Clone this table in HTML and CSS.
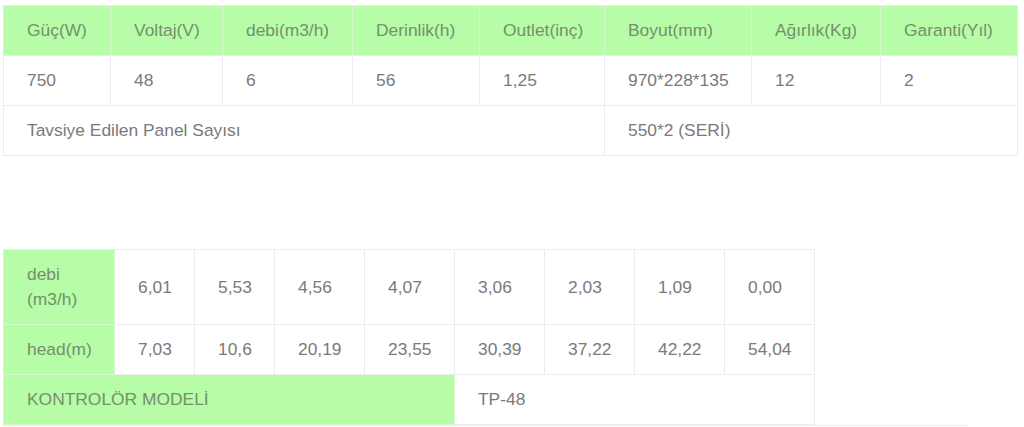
FILE: index.html
```html
<!DOCTYPE html>
<html lang="tr">
<head>
<meta charset="utf-8">
<title>Teknik Özellikler</title>
<link rel="stylesheet" href="styles.css">
</head>
<body>
<div class="page">
  <table class="spec">
    <colgroup>
      <col class="w107"><col class="w112"><col class="w130"><col class="w127"><col class="w125"><col class="w147"><col class="w129"><col class="w137">
    </colgroup>
    <thead>
      <tr>
        <th>Güç(W)</th><th>Voltaj(V)</th><th>debi(m3/h)</th><th>Derinlik(h)</th><th>Outlet(inç)</th><th>Boyut(mm)</th><th>Ağırlık(Kg)</th><th>Garanti(Yıl)</th>
      </tr>
    </thead>
    <tbody>
      <tr>
        <td>750</td><td>48</td><td>6</td><td>56</td><td>1,25</td><td>970*228*135</td><td>12</td><td>2</td>
      </tr>
      <tr>
        <td colspan="5">Tavsiye Edilen Panel Sayısı</td><td colspan="3">550*2 (SERİ)</td>
      </tr>
    </tbody>
  </table>

  <div class="curve-wrap">
    <table class="curve">
      <colgroup>
        <col class="w111"><col class="w80"><col class="w80"><col class="w90"><col class="w90"><col class="w90"><col class="w90"><col class="w90"><col class="w90">
      </colgroup>
      <tbody>
        <tr>
          <td class="green">debi (m3/h)</td><td>6,01</td><td>5,53</td><td>4,56</td><td>4,07</td><td>3,06</td><td>2,03</td><td>1,09</td><td>0,00</td>
        </tr>
        <tr>
          <td class="green">head(m)</td><td>7,03</td><td>10,6</td><td>20,19</td><td>23,55</td><td>30,39</td><td>37,22</td><td>42,22</td><td>54,04</td>
        </tr>
        <tr>
          <td class="green" colspan="5">KONTROLÖR MODELİ</td><td colspan="4">TP-48</td>
        </tr>
      </tbody>
    </table>
  </div>
</div>
</body>
</html>
```

FILE: styles.css
```css
html, body {
  margin: 0;
  padding: 0;
  background: #ffffff;
}

body {
  font-family: "Liberation Sans", Arial, sans-serif;
  font-size: 17.4px;
  color: #7a7a7a;
}

.page {
  padding: 5px 0 0 3px;
}

table {
  border-collapse: collapse;
  table-layout: fixed;
}

th, td {
  border: 1px solid #ececec;
  padding: 12px 18px 12px 23px;
  line-height: 25px;
  text-align: left;
  font-weight: normal;
  vertical-align: middle;
}

.spec {
  width: 1014px;
}

.spec th {
  background: #b7fca7;
  color: #74906c;
  border-color: #d9f7d1;
}

.w107 { width: 107px; }
.w112 { width: 112px; }
.w130 { width: 130px; }
.w127 { width: 127px; }
.w125 { width: 125px; }
.w147 { width: 147px; }
.w129 { width: 129px; }
.w137 { width: 137px; }
.w111 { width: 111px; }
.w80 { width: 80px; }
.w90 { width: 90px; }

.curve-wrap {
  margin-top: 93px;
  width: 965px;
  border-bottom: 1px solid #ececec;
}

.curve {
  width: 811px;
}

.curve td.green {
  background: #b7fca7;
  color: #74906c;
  border-color: #d9f7d1;
}
```
